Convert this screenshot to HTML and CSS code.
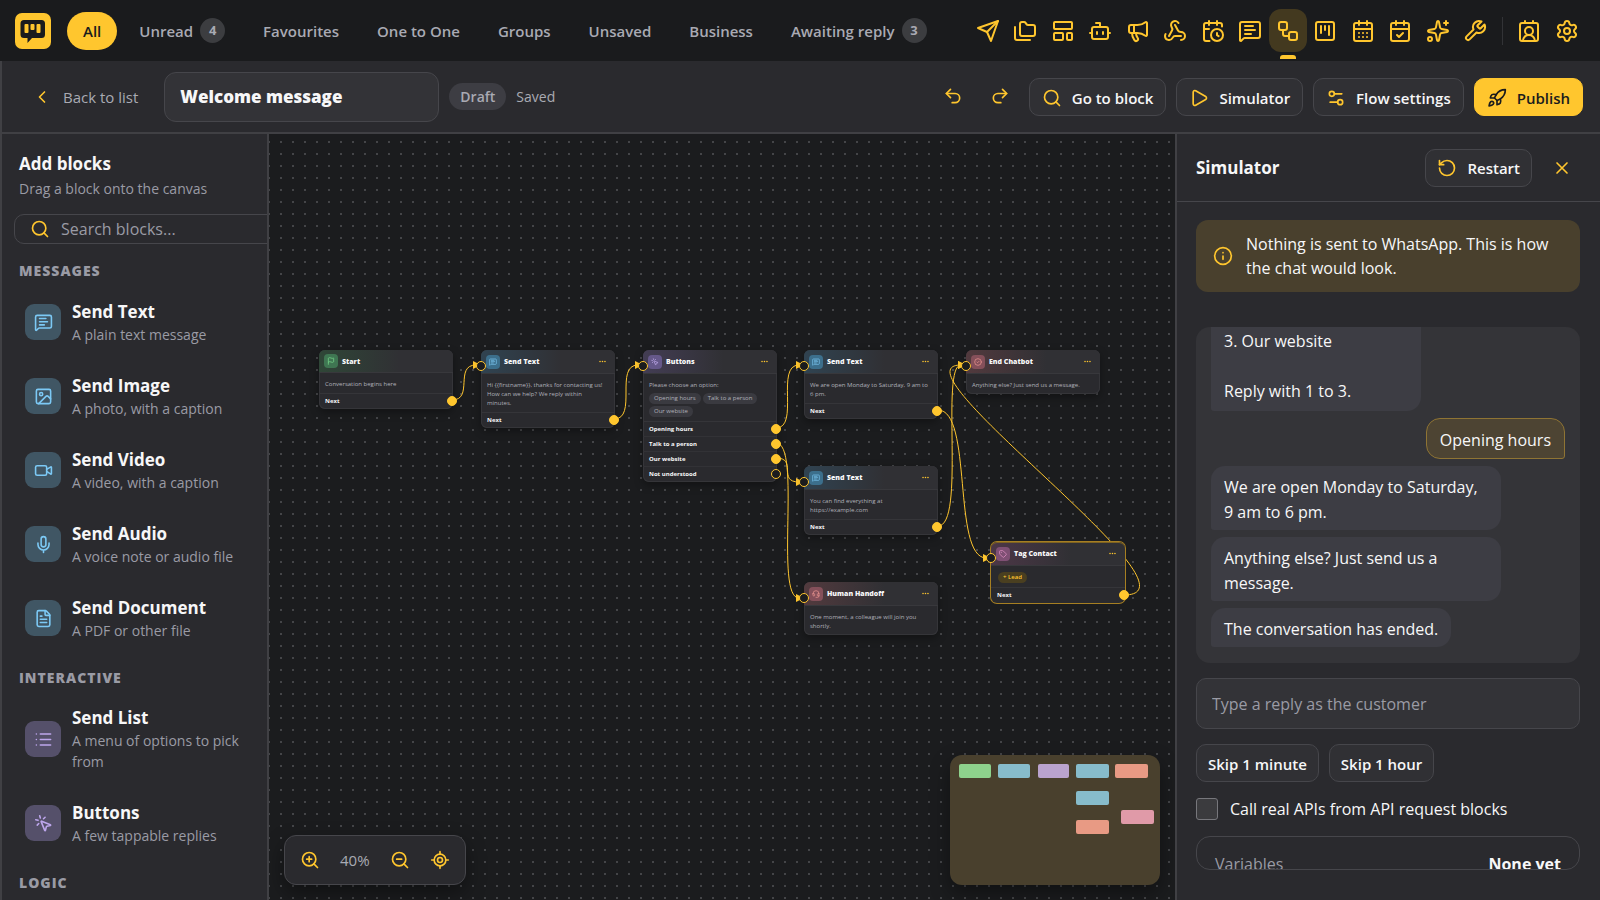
FILE: index.html
```html
<!DOCTYPE html>
<html lang="en">
<head>
    <meta charset="UTF-8">
    <meta name="viewport" content="width=device-width, initial-scale=1.0">
    <title>Welcome message - Chatbot flow</title>
    <link rel="stylesheet" href="styles.css">
</head>
<body>
    <!-- Icon sprite -->
    <svg class="sprite" aria-hidden="true">
        <symbol id="i-send" viewBox="0 0 24 24"><path d="m22 2-7 20-4-9-9-4Z"/><path d="M22 2 11 13"/></symbol>
        <symbol id="i-folders" viewBox="0 0 24 24"><path d="M20 17a2 2 0 0 0 2-2V8a2 2 0 0 0-2-2h-4.900a2 2 0 0 1-1.690-.9l-.8-1.200A2 2 0 0 0 11 3H9a2 2 0 0 0-2 2v10a2 2 0 0 0 2 2Z"/><path d="M2 8v11a2 2 0 0 0 2 2h13"/></symbol>
        <symbol id="i-template" viewBox="0 0 24 24"><rect x="3" y="3" width="18" height="7" rx="1"/><rect x="3" y="14" width="9" height="7" rx="1"/><rect x="16" y="14" width="5" height="7" rx="1"/></symbol>
        <symbol id="i-bot" viewBox="0 0 24 24"><path d="M12 8V4H8"/><rect x="4" y="8" width="16" height="12" rx="2"/><path d="M2 14h2M20 14h2M15 13v2M9 13v2"/></symbol>
        <symbol id="i-megaphone" viewBox="0 0 24 24"><path d="M11 6a13 13 0 0 0 8.400-2.800A1 1 0 0 1 21 4v12a1 1 0 0 1-1.600.8A13 13 0 0 0 11 14H5a2 2 0 0 1-2-2V8a2 2 0 0 1 2-2z"/><path d="M6 14a12 12 0 0 0 2.400 7.200 2 2 0 0 0 3.200-2.400A8 8 0 0 1 10 14"/><path d="M8 6v8"/></symbol>
        <symbol id="i-webhook" viewBox="0 0 24 24"><path d="M18 16.980h-5.990c-1.100 0-1.950.94-2.480 1.900A4 4 0 0 1 2 17c.01-.7.2-1.400.57-2"/><path d="m6 17 3.130-5.780c.53-.97.1-2.180-.5-3.100a4 4 0 1 1 6.890-4.060"/><path d="m12 6 3.130 5.730C15.660 12.700 16.900 13 18 13a4 4 0 0 1 0 8"/></symbol>
        <symbol id="i-cal-clock" viewBox="0 0 24 24"><path d="M16 14v2.200l1.600 1M16 2v4"/><path d="M21 7.500V6a2 2 0 0 0-2-2H5a2 2 0 0 0-2 2v14a2 2 0 0 0 2 2h3.500M3 10h5M8 2v4"/><circle cx="16" cy="16" r="6"/></symbol>
        <symbol id="i-message" viewBox="0 0 24 24"><path d="M22 17a2 2 0 0 1-2 2H6.828a2 2 0 0 0-1.414.586l-2.202 2.202A.71.71 0 0 1 2 21.286V5a2 2 0 0 1 2-2h16a2 2 0 0 1 2 2z"/><path d="M7 11h10M7 15h6M7 7h8"/></symbol>
        <symbol id="i-workflow" viewBox="0 0 24 24"><rect x="3" y="3" width="8" height="8" rx="2"/><path d="M7 11v4a2 2 0 0 0 2 2h4"/><rect x="13" y="13" width="8" height="8" rx="2"/></symbol>
        <symbol id="i-kanban" viewBox="0 0 24 24"><rect x="3" y="3" width="18" height="18" rx="2"/><path d="M8 7v7M12 7v4M16 7v9"/></symbol>
        <symbol id="i-cal-days" viewBox="0 0 24 24"><path d="M8 2v4M16 2v4M3 10h18"/><rect x="3" y="4" width="18" height="18" rx="2"/><path d="M8 14h.01M12 14h.01M16 14h.01M8 18h.01M12 18h.01M16 18h.01"/></symbol>
        <symbol id="i-cal-check" viewBox="0 0 24 24"><path d="M8 2v4M16 2v4M3 10h18"/><rect x="3" y="4" width="18" height="18" rx="2"/><path d="m9 16 2 2 4-4"/></symbol>
        <symbol id="i-sparkles" viewBox="0 0 24 24"><path d="M11.017 2.814a1 1 0 0 1 1.966 0l1.051 5.558a2 2 0 0 0 1.594 1.594l5.558 1.051a1 1 0 0 1 0 1.966l-5.558 1.051a2 2 0 0 0-1.594 1.594l-1.051 5.558a1 1 0 0 1-1.966 0l-1.051-5.558a2 2 0 0 0-1.594-1.594l-5.558-1.051a1 1 0 0 1 0-1.966l5.558-1.051a2 2 0 0 0 1.594-1.594z"/><path d="M20 2v4M22 4h-4"/><circle cx="4" cy="20" r="2"/></symbol>
        <symbol id="i-wrench" viewBox="0 0 24 24"><path d="M14.700 6.300a1 1 0 0 0 0 1.400l1.600 1.600a1 1 0 0 0 1.400 0l3.770-3.770a6 6 0 0 1-7.940 7.940l-6.910 6.910a2.120 2.120 0 0 1-3-3l6.910-6.910a6 6 0 0 1 7.940-7.940l-3.760 3.760z"/></symbol>
        <symbol id="i-contact" viewBox="0 0 24 24"><path d="M16 2v2M8 2v2M17.915 22a6 6 0 0 0-12 0"/><circle cx="12" cy="12" r="4"/><rect x="3" y="4" width="18" height="18" rx="2"/></symbol>
        <symbol id="i-settings" viewBox="0 0 24 24"><path d="M9.671 4.136a2.340 2.340 0 0 1 4.659 0 2.340 2.340 0 0 0 3.319 1.915 2.340 2.340 0 0 1 2.330 4.033 2.340 2.340 0 0 0 0 3.831 2.340 2.340 0 0 1-2.330 4.033 2.340 2.340 0 0 0-3.319 1.915 2.340 2.340 0 0 1-4.659 0 2.340 2.340 0 0 0-3.320-1.915 2.340 2.340 0 0 1-2.330-4.033 2.340 2.340 0 0 0 0-3.831A2.340 2.340 0 0 1 6.350 6.051a2.340 2.340 0 0 0 3.319-1.915"/><circle cx="12" cy="12" r="3"/></symbol>
        <symbol id="i-back" viewBox="0 0 24 24"><path d="m15 18-6-6 6-6"/></symbol>
        <symbol id="i-undo" viewBox="0 0 24 24"><path d="M9 14 4 9l5-5"/><path d="M4 9h10.500a5.500 5.500 0 0 1 0 11H11"/></symbol>
        <symbol id="i-redo" viewBox="0 0 24 24"><path d="m15 14 5-5-5-5"/><path d="M20 9H9.500a5.500 5.500 0 0 0 0 11H13"/></symbol>
        <symbol id="i-search" viewBox="0 0 24 24"><circle cx="11" cy="11" r="8"/><path d="m21 21-4.300-4.300"/></symbol>
        <symbol id="i-play" viewBox="0 0 24 24"><path d="M5 5a2 2 0 0 1 3.008-1.728l11.997 6.998a2 2 0 0 1 .003 3.458l-12 7A2 2 0 0 1 5 19z"/></symbol>
        <symbol id="i-sliders" viewBox="0 0 24 24"><path d="M14 17H5M19 7h-9"/><circle cx="17" cy="17" r="3"/><circle cx="7" cy="7" r="3"/></symbol>
        <symbol id="i-rocket" viewBox="0 0 24 24"><path d="M4.500 16.500c-1.500 1.260-2 5-2 5s3.740-.5 5-2c.71-.84.7-2.130-.09-2.910a2.180 2.180 0 0 0-2.910-.09z"/><path d="m12 15-3-3a22 22 0 0 1 2-3.950A12.880 12.880 0 0 1 22 2c0 2.720-.78 7.500-6 11a22.350 22.350 0 0 1-4 2z"/><path d="M9 12H4s.55-3.030 2-4c1.620-1.080 5 0 5 0"/><path d="M12 15v5s3.030-.55 4-2c1.080-1.620 0-5 0-5"/></symbol>
        <symbol id="i-restart" viewBox="0 0 24 24"><path d="M3 12a9 9 0 1 0 9-9 9.750 9.750 0 0 0-6.740 2.740L3 8"/><path d="M3 3v5h5"/></symbol>
        <symbol id="i-close" viewBox="0 0 24 24"><path d="M18 6 6 18M6 6l12 12"/></symbol>
        <symbol id="i-info" viewBox="0 0 24 24"><circle cx="12" cy="12" r="10"/><path d="M12 16v-4M12 8h.01"/></symbol>
        <symbol id="i-image" viewBox="0 0 24 24"><rect x="3" y="3" width="18" height="18" rx="2"/><circle cx="9" cy="9" r="2"/><path d="m21 15-3.086-3.086a2 2 0 0 0-2.828 0L6 21"/></symbol>
        <symbol id="i-video" viewBox="0 0 24 24"><path d="m16 13 5.223 3.482a.5.5 0 0 0 .777-.416V7.870a.5.5 0 0 0-.752-.432L16 10.500"/><rect x="2" y="6" width="14" height="12" rx="2"/></symbol>
        <symbol id="i-mic" viewBox="0 0 24 24"><path d="M12 19v3M19 10v2a7 7 0 0 1-14 0v-2"/><rect x="9" y="2" width="6" height="13" rx="3"/></symbol>
        <symbol id="i-file" viewBox="0 0 24 24"><path d="M6 22a2 2 0 0 1-2-2V4a2 2 0 0 1 2-2h8a2.400 2.400 0 0 1 1.704.706l3.588 3.588A2.400 2.400 0 0 1 20 8v12a2 2 0 0 1-2 2z"/><path d="M14 2v5a1 1 0 0 0 1 1h5M10 9H8M16 13H8M16 17H8"/></symbol>
        <symbol id="i-list" viewBox="0 0 24 24"><path d="M3 5h.01M3 12h.01M3 19h.01M8 5h13M8 12h13M8 19h13"/></symbol>
        <symbol id="i-click" viewBox="0 0 24 24"><path d="M14 4.100 12 6M5.100 8l-2.900-.8M6 12l-1.900 2M7.200 2.200 8 5.100"/><path d="M9.037 9.690a.498.498 0 0 1 .653-.653l11 4.500a.5.5 0 0 1-.074.949l-4.349 1.041a1 1 0 0 0-.74.739l-1.040 4.350a.5.5 0 0 1-.95.074z"/></symbol>
        <symbol id="i-flag" viewBox="0 0 24 24"><path d="M4 22V4a1 1 0 0 1 .4-.8A6 6 0 0 1 8 2c3 0 5 2 7.333 2q2 0 3.067-.8A1 1 0 0 1 20 4v10a1 1 0 0 1-.4.8A6 6 0 0 1 16 16c-3 0-5-2-8-2a6 6 0 0 0-4 1.528"/></symbol>
        <symbol id="i-check" viewBox="0 0 24 24"><circle cx="12" cy="12" r="10"/><path d="m9 12 2 2 4-4"/></symbol>
        <symbol id="i-headset" viewBox="0 0 24 24"><path d="M3 11h3a2 2 0 0 1 2 2v3a2 2 0 0 1-2 2H5a2 2 0 0 1-2-2zm0 0a9 9 0 1 1 18 0m0 0v5a2 2 0 0 1-2 2h-1a2 2 0 0 1-2-2v-3a2 2 0 0 1 2-2z"/><path d="M21 16v2a4 4 0 0 1-4 4h-5"/></symbol>
        <symbol id="i-tag" viewBox="0 0 24 24"><path d="M12.586 2.586A2 2 0 0 0 11.172 2H4a2 2 0 0 0-2 2v7.172a2 2 0 0 0 .586 1.414l8.704 8.704a2.426 2.426 0 0 0 3.420 0l6.580-6.580a2.426 2.426 0 0 0 0-3.420z"/><path d="M7.500 7.500h.01"/></symbol>
        <symbol id="i-zoom-in" viewBox="0 0 24 24"><circle cx="11" cy="11" r="8"/><path d="m21 21-4.350-4.350M11 8v6M8 11h6"/></symbol>
        <symbol id="i-zoom-out" viewBox="0 0 24 24"><circle cx="11" cy="11" r="8"/><path d="m21 21-4.350-4.350M8 11h6"/></symbol>
        <symbol id="i-locate" viewBox="0 0 24 24"><path d="M2 12h3M19 12h3M12 2v3M12 19v3"/><circle cx="12" cy="12" r="7"/><circle cx="12" cy="12" r="3"/></symbol>
        <symbol id="i-more" viewBox="0 0 8 8"><circle cx="1.200" cy="4" r=".9"/><circle cx="4" cy="4" r=".9"/><circle cx="6.800" cy="4" r=".9"/></symbol>
    </svg>

    <header class="topbar">
        <svg class="logo" viewBox="0 0 36 36" aria-hidden="true">
            <rect class="logo-bg" width="36" height="36" rx="7"/>
            <path class="logo-bubble" d="M9 7h17.500a3.500 3.500 0 0 1 3.500 3.500v11a3.500 3.500 0 0 1-3.500 3.500H17l-4.500 5v-5H9a3.500 3.500 0 0 1-3.500-3.500v-11A3.500 3.500 0 0 1 9 7z"/>
            <rect class="logo-bg" x="9.500" y="11" width="4" height="9" rx="1"/>
            <rect class="logo-bg" x="15.500" y="11" width="4" height="6" rx="1"/>
            <rect class="logo-bg" x="21.500" y="11" width="4" height="9" rx="1"/>
        </svg>
        <nav class="tabs">
            <a class="tab active" href="#">All</a>
            <a class="tab" href="#">Unread <span class="count">4</span></a>
            <a class="tab" href="#">Favourites</a>
            <a class="tab" href="#">One to One</a>
            <a class="tab" href="#">Groups</a>
            <a class="tab" href="#">Unsaved</a>
            <a class="tab" href="#">Business</a>
            <a class="tab" href="#">Awaiting reply <span class="count">3</span></a>
        </nav>
        <div class="tools">
            <button class="tool" aria-label="Broadcast"><svg class="icon"><use href="#i-send"/></svg></button>
            <button class="tool" aria-label="Folders"><svg class="icon"><use href="#i-folders"/></svg></button>
            <button class="tool" aria-label="Templates"><svg class="icon"><use href="#i-template"/></svg></button>
            <button class="tool" aria-label="Bots"><svg class="icon"><use href="#i-bot"/></svg></button>
            <button class="tool" aria-label="Campaigns"><svg class="icon"><use href="#i-megaphone"/></svg></button>
            <button class="tool" aria-label="Webhooks"><svg class="icon"><use href="#i-webhook"/></svg></button>
            <button class="tool" aria-label="Scheduled"><svg class="icon"><use href="#i-cal-clock"/></svg></button>
            <button class="tool" aria-label="Quick replies"><svg class="icon"><use href="#i-message"/></svg></button>
            <button class="tool active" aria-label="Flows"><svg class="icon"><use href="#i-workflow"/></svg></button>
            <button class="tool" aria-label="Board"><svg class="icon"><use href="#i-kanban"/></svg></button>
            <button class="tool" aria-label="Calendar"><svg class="icon"><use href="#i-cal-days"/></svg></button>
            <button class="tool" aria-label="Tasks"><svg class="icon"><use href="#i-cal-check"/></svg></button>
            <button class="tool" aria-label="AI"><svg class="icon"><use href="#i-sparkles"/></svg></button>
            <button class="tool" aria-label="Utilities"><svg class="icon"><use href="#i-wrench"/></svg></button>
        </div>
        <div class="tools account">
            <button class="tool" aria-label="Profile"><svg class="icon"><use href="#i-contact"/></svg></button>
            <button class="tool" aria-label="Settings"><svg class="icon"><use href="#i-settings"/></svg></button>
        </div>
    </header>

    <div class="builder">
        <div class="toolbar">
            <a class="back" href="#"><svg class="icon"><use href="#i-back"/></svg>Back to list</a>
            <input class="flow-name" type="text" aria-label="Flow name" value="Welcome message">
            <span class="draft">Draft</span>
            <span class="saved">Saved</span>
            <div class="actions">
                <button class="icon-btn" aria-label="Undo"><svg class="icon"><use href="#i-undo"/></svg></button>
                <button class="icon-btn" aria-label="Redo"><svg class="icon"><use href="#i-redo"/></svg></button>
                <button class="btn"><svg class="icon"><use href="#i-search"/></svg>Go to block</button>
                <button class="btn"><svg class="icon"><use href="#i-play"/></svg>Simulator</button>
                <button class="btn"><svg class="icon"><use href="#i-sliders"/></svg>Flow settings</button>
                <button class="btn primary"><svg class="icon"><use href="#i-rocket"/></svg>Publish</button>
            </div>
        </div>

        <aside class="sidebar">
            <h2>Add blocks</h2>
            <p class="hint">Drag a block onto the canvas</p>
            <label class="search">
                <svg class="icon"><use href="#i-search"/></svg>
                <input type="text" aria-label="Search blocks" placeholder="Search blocks...">
            </label>

            <h3>Messages</h3>
            <div class="block blue"><span class="block-icon"><svg class="icon"><use href="#i-message"/></svg></span><div><strong>Send Text</strong><p>A plain text message</p></div></div>
            <div class="block blue"><span class="block-icon"><svg class="icon"><use href="#i-image"/></svg></span><div><strong>Send Image</strong><p>A photo, with a caption</p></div></div>
            <div class="block blue"><span class="block-icon"><svg class="icon"><use href="#i-video"/></svg></span><div><strong>Send Video</strong><p>A video, with a caption</p></div></div>
            <div class="block blue"><span class="block-icon"><svg class="icon"><use href="#i-mic"/></svg></span><div><strong>Send Audio</strong><p>A voice note or audio file</p></div></div>
            <div class="block blue"><span class="block-icon"><svg class="icon"><use href="#i-file"/></svg></span><div><strong>Send Document</strong><p>A PDF or other file</p></div></div>

            <h3>Interactive</h3>
            <div class="block purple"><span class="block-icon"><svg class="icon"><use href="#i-list"/></svg></span><div><strong>Send List</strong><p>A menu of options to pick from</p></div></div>
            <div class="block purple"><span class="block-icon"><svg class="icon"><use href="#i-click"/></svg></span><div><strong>Buttons</strong><p>A few tappable replies</p></div></div>

            <h3>Logic</h3>
        </aside>

        <main class="canvas">
            <svg class="wires" aria-hidden="true">
                <defs>
                    <marker id="arrow" viewBox="0 0 8 8" refX="3" refY="4" markerWidth="8" markerHeight="8" markerUnits="userSpaceOnUse" orient="0">
                        <path d="M0 0 8 4 0 8z"/>
                    </marker>
                </defs>
                <path d="M183 266C205 266 185 231 207 231"/>
                <path d="M345 285C369 285 345 231 369 231"/>
                <path d="M507 294C531 294 506 231 530 231"/>
                <path d="M507 309C533 309 505 464 530 464"/>
                <path d="M507 324C529 324 508 348 530 348"/>
                <path d="M669 276C704 276 683 423 717 424"/>
                <path d="M669 392C697 392 671 231 692 231"/>
                <path d="M855 461C944 461 618 231 692 231"/>
            </svg>

            <section class="node green" style="left: 50px; top: 216px">
                <header><span class="node-icon"><svg class="icon"><use href="#i-flag"/></svg></span>Start</header>
                <div class="node-body">Conversation begins here</div>
                <div class="outs"><div class="out linked">Next</div></div>
            </section>
            <section class="node blue input" style="left: 212px; top: 216px">
                <header><span class="node-icon"><svg class="icon"><use href="#i-message"/></svg></span>Send Text<button class="more" aria-label="More"><svg><use href="#i-more"/></svg></button></header>
                <div class="node-body">Hi {{firstname}}, thanks for contacting us! How can we help? We reply within<br>minutes.</div>
                <div class="outs"><div class="out linked">Next</div></div>
            </section>
            <section class="node purple input" style="left: 374px; top: 216px">
                <header><span class="node-icon"><svg class="icon"><use href="#i-click"/></svg></span>Buttons<button class="more" aria-label="More"><svg><use href="#i-more"/></svg></button></header>
                <div class="node-body">Please choose an option:
                    <div class="chips"><span>Opening hours</span><span>Talk to a person</span><span>Our website</span></div>
                </div>
                <div class="outs">
                    <div class="out linked">Opening hours</div>
                    <div class="out linked">Talk to a person</div>
                    <div class="out linked">Our website</div>
                    <div class="out">Not understood</div>
                </div>
            </section>
            <section class="node blue input" style="left: 535px; top: 216px">
                <header><span class="node-icon"><svg class="icon"><use href="#i-message"/></svg></span>Send Text<button class="more" aria-label="More"><svg><use href="#i-more"/></svg></button></header>
                <div class="node-body">We are open Monday to Saturday, 9 am to 6 pm.</div>
                <div class="outs"><div class="out linked">Next</div></div>
            </section>
            <section class="node red input" style="left: 697px; top: 216px">
                <header><span class="node-icon"><svg class="icon"><use href="#i-check"/></svg></span>End Chatbot<button class="more" aria-label="More"><svg><use href="#i-more"/></svg></button></header>
                <div class="node-body">Anything else? Just send us a message.</div>
            </section>
            <section class="node blue input" style="left: 535px; top: 332px">
                <header><span class="node-icon"><svg class="icon"><use href="#i-message"/></svg></span>Send Text<button class="more" aria-label="More"><svg><use href="#i-more"/></svg></button></header>
                <div class="node-body">You can find everything at https://example.com</div>
                <div class="outs"><div class="out linked">Next</div></div>
            </section>
            <section class="node red input" style="left: 535px; top: 448px">
                <header><span class="node-icon"><svg class="icon"><use href="#i-headset"/></svg></span>Human Handoff<button class="more" aria-label="More"><svg><use href="#i-more"/></svg></button></header>
                <div class="node-body">One moment, a colleague will join you shortly.</div>
            </section>
            <section class="node pink input selected" style="left: 722px; top: 408px">
                <header><span class="node-icon"><svg class="icon"><use href="#i-tag"/></svg></span>Tag Contact<button class="more" aria-label="More"><svg><use href="#i-more"/></svg></button></header>
                <div class="node-body"><div class="chips"><span class="lead">+ Lead</span></div></div>
                <div class="outs"><div class="out linked">Next</div></div>
            </section>

            <div class="zoom-bar">
                <button aria-label="Zoom in"><svg class="icon"><use href="#i-zoom-in"/></svg></button>
                <span>40%</span>
                <button aria-label="Zoom out"><svg class="icon"><use href="#i-zoom-out"/></svg></button>
                <button aria-label="Fit to view"><svg class="icon"><use href="#i-locate"/></svg></button>
            </div>

            <svg class="minimap" viewBox="0 0 210 130" aria-hidden="true">
                <rect class="m-green" x="9" y="9" width="32" height="14" rx="2"/>
                <rect class="m-blue" x="48" y="9" width="32" height="14" rx="2"/>
                <rect class="m-purple" x="88" y="9" width="31" height="14" rx="2"/>
                <rect class="m-blue" x="126" y="9" width="33" height="14" rx="2"/>
                <rect class="m-red" x="165" y="9" width="33" height="14" rx="2"/>
                <rect class="m-blue" x="126" y="36" width="33" height="14" rx="2"/>
                <rect class="m-pink" x="171" y="55" width="33" height="14" rx="2"/>
                <rect class="m-red" x="126" y="65" width="33" height="14" rx="2"/>
            </svg>
        </main>

        <aside class="simulator">
            <header class="sim-head">
                <h2>Simulator</h2>
                <button class="btn"><svg class="icon"><use href="#i-restart"/></svg>Restart</button>
                <button class="icon-btn" aria-label="Close"><svg class="icon"><use href="#i-close"/></svg></button>
            </header>
            <div class="sim-body">
                <div class="notice"><svg class="icon"><use href="#i-info"/></svg><p>Nothing is sent to WhatsApp. This is how the chat would look.</p></div>
                <div class="chat">
                    <p class="bubble menu">3. Our website<br><br>Reply with 1 to 3.</p>
                    <p class="bubble mine">Opening hours</p>
                    <p class="bubble">We are open Monday to Saturday, 9 am to 6 pm.</p>
                    <p class="bubble">Anything else? Just send us a message.</p>
                    <p class="bubble">The conversation has ended.</p>
                </div>
                <input class="reply" type="text" aria-label="Reply" placeholder="Type a reply as the customer">
                <div class="skips">
                    <button class="btn">Skip 1 minute</button>
                    <button class="btn">Skip 1 hour</button>
                </div>
                <label class="check"><input type="checkbox">Call real APIs from API request blocks</label>
                <div class="variables"><span>Variables</span><strong>None yet</strong></div>
            </div>
        </aside>
    </div>
</body>
</html>
```

FILE: styles.css
```css
* {
    box-sizing: border-box;
}

body {
    margin: 0;
    height: 100vh;
    display: flex;
    flex-direction: column;
    overflow: hidden;
    background: #1a1b1d;
    color: #f7f7f8;
    font-family: "Open Sans", "Noto Sans", sans-serif;
    font-size: 16px;
}

h2, h3, p {
    margin: 0;
}

a {
    color: inherit;
    text-decoration: none;
}

button, input {
    font: inherit;
    color: inherit;
}

button {
    border: none;
    background: none;
    padding: 0;
    cursor: pointer;
}

.sprite {
    display: none;
}

.icon {
    width: 20px;
    height: 20px;
    flex: none;
    fill: none;
    stroke: #ffc62e;
    stroke-width: 2;
    stroke-linecap: round;
    stroke-linejoin: round;
}

/* Top bar */
.topbar {
    height: 61px;
    flex: none;
    display: flex;
    align-items: center;
    padding: 0 14px 0 15px;
}

.logo {
    width: 36px;
    height: 36px;
    flex: none;
    margin-right: 16px;
}

.logo-bg {
    fill: #ffc62e;
}

.logo-bubble {
    fill: #1a1b1d;
}

.tabs {
    display: flex;
    gap: 6px;
    flex: 1;
}

.tab {
    height: 38px;
    display: flex;
    align-items: center;
    gap: 7px;
    padding: 0 16px;
    border-radius: 19px;
    color: #a9aab3;
    font-size: 15px;
    font-weight: 600;
    white-space: nowrap;
}

.tab.active {
    background: #ffc62e;
    color: #1a1b1d;
}

.count {
    width: 25px;
    height: 25px;
    border-radius: 50%;
    background: #3c3d40;
    font-size: 13px;
    font-weight: 700;
    line-height: 25px;
    text-align: center;
}

.tools {
    display: flex;
    width: 525px;
    flex: none;
    margin-right: 8px;
}

.tools.account {
    width: 84px;
    margin-right: 0;
    padding-left: 7px;
    border-left: 1px solid #323336;
    height: 28px;
    align-items: center;
}

.tool {
    flex: 1;
    height: 43px;
    display: flex;
    align-items: center;
    justify-content: center;
    border-radius: 12px;
}

.tool .icon {
    width: 24px;
    height: 24px;
}

.tool.active {
    position: relative;
    background: #43391f;
}

.tool.active::after {
    content: "";
    position: absolute;
    left: 11px;
    right: 11px;
    bottom: -7px;
    height: 4px;
    border-radius: 3px 3px 0 0;
    background: #ffc62e;
}

/* Builder layout */
.builder {
    flex: 1;
    min-height: 0;
    display: grid;
    grid-template-columns: 267px 1fr 425px;
    grid-template-rows: 73px minmax(0, 1fr);
    background: #2a2a2e;
    border-left: 2px solid #404044;
}

.toolbar {
    grid-column: 1 / -1;
    display: flex;
    align-items: center;
    gap: 10px;
    padding: 0 17px 0 30px;
    border-bottom: 2px solid #404044;
}

.back {
    display: flex;
    align-items: center;
    gap: 11px;
    margin-right: 16px;
    color: #a9aab3;
    font-size: 15px;
}

.flow-name {
    width: 275px;
    height: 50px;
    padding: 0 15px;
    border: 1px solid #46464b;
    border-radius: 12px;
    background: #333337;
    font-size: 17px;
    font-weight: 800;
}

.draft {
    padding: 0 11px;
    border-radius: 14px;
    background: #3d3d43;
    color: #a9aab3;
    font-size: 14px;
    font-weight: 600;
    line-height: 27px;
}

.saved {
    color: #a9aab3;
    font-size: 14px;
}

.actions {
    display: flex;
    gap: 10px;
    margin-left: auto;
}

.icon-btn {
    width: 37px;
    height: 37px;
    display: flex;
    align-items: center;
    justify-content: center;
}

.btn {
    height: 38px;
    display: flex;
    align-items: center;
    gap: 10px;
    padding: 2px 12px 0;
    border: 1px solid #46464b;
    border-radius: 10px;
    background: #303034;
    font-size: 15px;
    font-weight: 600;
    white-space: nowrap;
}

.btn.primary {
    background: #ffc62e;
    border-color: #ffc62e;
    color: #1a1b1d;
}

.primary .icon {
    stroke: #1a1b1d;
}

/* Block palette */
.sidebar {
    padding: 17px 17px 0;
    border-right: 2px solid #404044;
    overflow: hidden;
}

h2 {
    font-size: 17px;
    font-weight: 700;
    line-height: 26px;
}

.hint {
    color: #9a9ba5;
    font-size: 14px;
    line-height: 24px;
}

.search {
    display: flex;
    align-items: center;
    gap: 11px;
    width: 290px;
    height: 30px;
    margin: 13px 0 0 -5px;
    padding-left: 15px;
    border: 1px solid #46464b;
    border-radius: 10px;
}

.search input {
    flex: 1;
    border: none;
    background: none;
    outline: none;
    padding: 0;
}

::placeholder {
    color: #9a9ba5;
    opacity: 1;
}

h3 {
    padding-top: 13px;
    color: #9a9ba5;
    font-size: 14px;
    font-weight: 800;
    line-height: 20px;
    letter-spacing: 1px;
    text-transform: uppercase;
    height: 37px;
}

.search + h3 {
    margin-top: 4px;
}

.block {
    display: flex;
    align-items: center;
    gap: 11px;
    padding: 14px 0 14px 6px;
}

.block-icon {
    width: 36px;
    height: 36px;
    flex: none;
    display: flex;
    align-items: center;
    justify-content: center;
    border-radius: 9px;
}

.block strong {
    display: block;
    font-size: 17px;
    line-height: 24px;
}

.block p {
    color: #9a9ba5;
    font-size: 14px;
    line-height: 21px;
}

.blue .block-icon {
    background: #405664;
}

.blue .icon {
    stroke: #7cc9f5;
}

.purple .block-icon {
    background: #55506a;
}

.purple .icon {
    stroke: #bda6ec;
}

.block .icon {
    width: 19px;
    height: 19px;
}

.block {
    min-height: 74px;
}

/* Canvas */
.canvas {
    position: relative;
    overflow: hidden;
    background: #1b1c1e radial-gradient(circle, #444548 1px, transparent 1px) 6px 2px / 12px 12px;
}

.wires {
    position: absolute;
    inset: 0;
    width: 100%;
    height: 100%;
    fill: none;
    stroke: #ffc62e;
    stroke-width: 1;
}

.wires > path {
    marker-end: url(#arrow);
}

.wires marker path {
    fill: #ffc62e;
    stroke: none;
}

.node {
    position: absolute;
    width: 134px;
    border-radius: 6px;
    background: #2a2a2e;
    box-shadow: inset 0 0 0 1px #353539, 0 3px 8px rgba(0, 0, 0, 0.35);
    font-size: 6px;
    line-height: 9px;
}

.node header {
    height: 24px;
    display: flex;
    align-items: center;
    gap: 4px;
    padding: 0 9px 0 5px;
    border-bottom: 1px solid #38383c;
    border-radius: 6px 6px 0 0;
    background: linear-gradient(90deg, var(--tint), #303034 60%);
    font-size: 7px;
    font-weight: 800;
}

.node.green header {
    height: 23px;
}

.node-icon {
    width: 14px;
    height: 14px;
    display: flex;
    align-items: center;
    justify-content: center;
    border-radius: 4px;
    background: var(--box);
}

.node .icon {
    width: 8px;
    height: 8px;
    stroke: var(--line);
}

.node.green {
    --tint: #2f4637;
    --box: #3f7652;
    --line: #7be08f;
}

.node.blue {
    --tint: #304351;
    --box: #3c6f8c;
    --line: #7cc9f5;
}

.node.purple {
    --tint: #433d54;
    --box: #65588a;
    --line: #c4aef0;
}

.node.red {
    --tint: #523a3e;
    --box: #85505a;
    --line: #f29a94;
}

.node.pink {
    --tint: #4c3747;
    --box: #7f5074;
    --line: #f09ad0;
}

.more {
    display: flex;
    margin-left: auto;
}

.more svg {
    width: 7px;
    height: 7px;
    fill: #ffc62e;
}

.node-body {
    padding: 7px 6px 4px;
    color: #b0b1ba;
}

.chips {
    display: flex;
    flex-wrap: wrap;
    gap: 2px;
    padding-top: 3px;
}

.chips span {
    padding: 0 5px;
    border-radius: 6px;
    background: #3a3a40;
    line-height: 11px;
}

.selected .node-body {
    padding: 3px 7px 4px;
}

.chips .lead {
    background: #4a3f20;
    color: #ffc62e;
    font-weight: 600;
}

.outs {
    border-top: 1px solid #353539;
}

.out {
    position: relative;
    padding: 0 6px;
    font-weight: 700;
    line-height: 15px;
}

.out + .out {
    box-shadow: 0 -1px #323236;
}

/* connection handles */
.out::after,
.node.input::before {
    content: "";
    position: absolute;
    width: 8px;
    height: 8px;
    border: 1px solid #ffc62e;
    border-radius: 50%;
    background: #1b1c1e;
}

.out::after {
    right: -4px;
    top: 2px;
}

.out.linked::after {
    background: #ffc62e;
}

.node.input::before {
    left: -5px;
    top: 11px;
}

.selected {
    box-shadow: 0 0 0 1px #a67f22;
}

.selected header {
    box-shadow: inset 0 1px #7d6223;
}

.zoom-bar {
    position: absolute;
    left: 15px;
    bottom: 15px;
    height: 50px;
    display: flex;
    align-items: center;
    gap: 20px;
    padding: 0 15px;
    border: 1px solid #46464b;
    border-radius: 12px;
    background: #2a2a2e;
    box-shadow: 0 8px 20px rgba(0, 0, 0, 0.4);
    color: #a9aab3;
    font-size: 15px;
}

.zoom-bar button {
    display: flex;
}

.minimap {
    position: absolute;
    right: 15px;
    bottom: 15px;
    width: 210px;
    height: 130px;
    border-radius: 12px;
    background: #49402d;
    box-shadow: 0 8px 20px rgba(0, 0, 0, 0.4);
}

.m-green {
    fill: #8ed28c;
}

.m-blue {
    fill: #87bccb;
}

.m-purple {
    fill: #baa3ce;
}

.m-red {
    fill: #e89a84;
}

.m-pink {
    fill: #e09aa8;
}

/* Simulator */
.simulator {
    display: flex;
    flex-direction: column;
    min-height: 0;
    border-left: 2px solid #404044;
}

.simulator .btn {
    padding: 1px 11px 0;
}

.sim-head {
    height: 68px;
    flex: none;
    display: flex;
    align-items: center;
    gap: 11px;
    padding: 0 20px 0 19px;
    border-bottom: 1px solid #46464b;
}

.sim-head h2 {
    flex: 1;
}

.sim-body {
    flex: 1;
    min-height: 0;
    display: flex;
    flex-direction: column;
    gap: 15px;
    padding: 18px 20px 30px 19px;
}

.notice {
    display: flex;
    align-items: center;
    gap: 13px;
    padding: 12px 17px;
    border-radius: 12px;
    background: #49402d;
    line-height: 24px;
}

.chat {
    flex: 1;
    min-height: 0;
    display: flex;
    flex-direction: column;
    justify-content: flex-end;
    align-items: flex-start;
    gap: 7px;
    margin-top: 20px;
    padding: 0 15px 16px;
    border-radius: 14px;
    background: #343438;
    overflow: hidden;
}

.bubble {
    flex: none;
    max-width: 290px;
    padding: 9px 13px 5px;
    border-radius: 14px 14px 14px 3px;
    background: #3d3d44;
    line-height: 25px;
}

/* long menu message, scrolled partly out of view */
.bubble.menu {
    width: 210px;
    padding-top: 30px;
    padding-bottom: 7px;
}

.bubble.mine {
    align-self: flex-end;
    border: 1px solid #8f7434;
    border-radius: 14px 14px 3px 14px;
    background: #4d4433;
}

.reply {
    width: 100%;
    height: 51px;
    flex: none;
    padding: 0 15px;
    border: 1px solid #46464b;
    border-radius: 10px;
    background: #333337;
}

.skips {
    display: flex;
    gap: 10px;
}

.check {
    display: flex;
    align-items: center;
    gap: 12px;
    line-height: 24px;
}

.check input {
    appearance: none;
    width: 22px;
    height: 22px;
    margin: 0;
    border: 1px solid #77777c;
    border-radius: 3px;
    background: #3b3b3e;
}

.variables {
    height: 34px;
    flex: none;
    display: flex;
    justify-content: space-between;
    padding: 15px 18px 0;
    border: 1px solid #46464b;
    border-radius: 14px;
    overflow: hidden;
    line-height: 24px;
}

.variables span {
    color: #9a9ba5;
}
```
